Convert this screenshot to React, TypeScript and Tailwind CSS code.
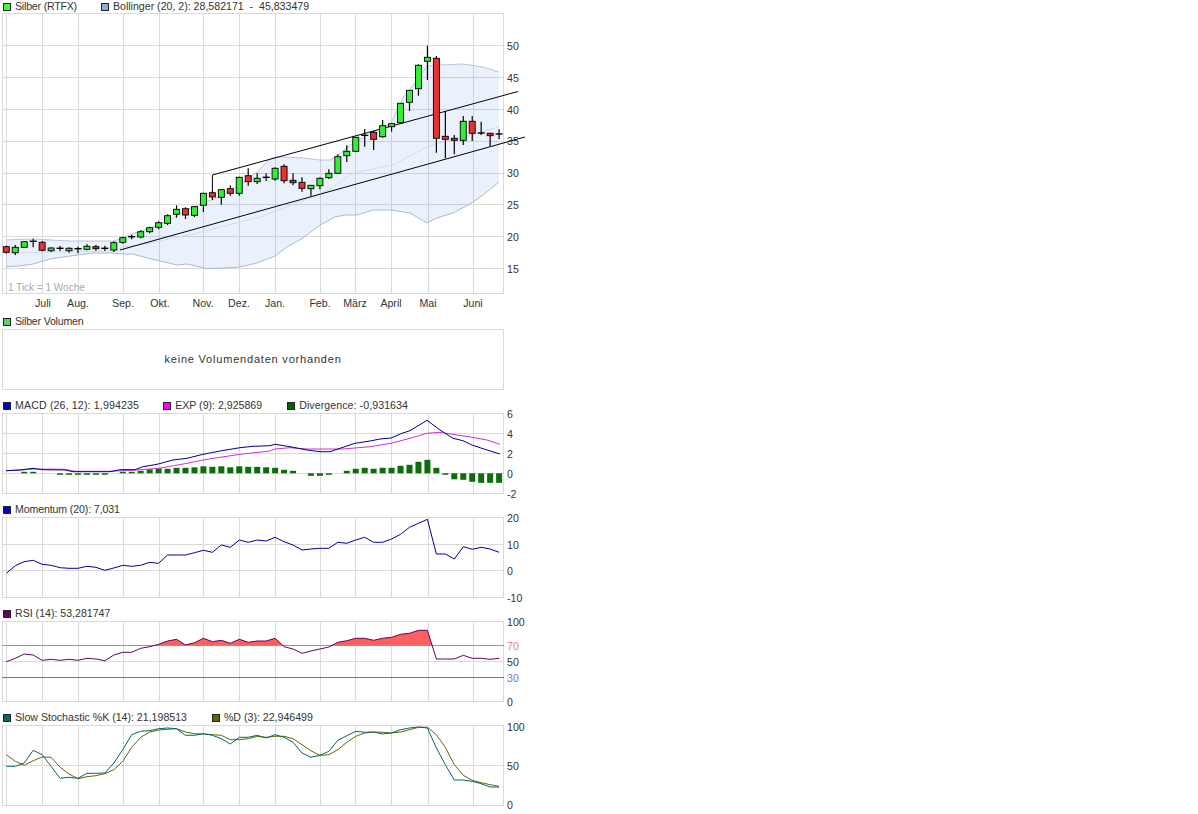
const idx = (i: number) => 6.3 + 8.96 * i;
const series = (ys: number[]) => ys.map((y, i) => `${idx(i).toFixed(1)},${y}`).join(' ');

const verticals = [2, 6, 42, 78, 123, 159, 203, 239, 275, 320, 355, 391, 428, 473, 503];
const months: [string, number][] = [
  ['Juli', 43], ['Aug.', 78], ['Sep.', 123], ['Okt.', 160], ['Nov.', 203], ['Dez.', 239],
  ['Jan.', 275], ['Feb.', 320], ['März', 355], ['April', 391], ['Mai', 428], ['Juni', 473],
];

// top, bottom, wick top, wick bottom, colour (d = doji)
type Candle = [number, number, number, number, 'g' | 'r' | 'd'];
const candles: Candle[] = [
  [246.7, 252.3, 245.5, 253.5, 'r'], [247.3, 252.7, 245, 255, 'g'], [241.7, 247.3, 241, 247.5, 'g'],
  [241.3, 241.3, 238.7, 247.3, 'd'], [242.3, 250.3, 241, 251.3, 'r'], [248, 250.7, 247.3, 252, 'g'],
  [248.3, 248.3, 246, 251, 'd'], [248.3, 250.7, 247.3, 252.7, 'g'], [248.7, 248.7, 246.7, 253.3, 'd'],
  [246.3, 249.3, 244.3, 250.3, 'g'], [246.7, 248.7, 245, 250.7, 'r'], [248.3, 248.3, 245.7, 251, 'd'],
  [242.7, 250, 241.3, 252, 'g'], [237.7, 242.3, 236.7, 243.7, 'g'], [236.7, 236.7, 234.7, 239.3, 'd'],
  [231.7, 237, 230.3, 238.3, 'g'], [227.7, 231.7, 226.7, 233.3, 'g'], [222.7, 227.3, 221.3, 229.3, 'g'],
  [215.7, 223.3, 214.3, 225, 'g'], [209.3, 214.3, 205.3, 217.7, 'g'], [208.7, 215, 207.3, 219, 'r'],
  [206.7, 215.3, 206, 217, 'g'], [193.3, 205.3, 192.7, 212, 'g'], [192.7, 197, 191, 200, 'r'],
  [189.7, 197.3, 189, 204.7, 'g'], [188.7, 193.3, 185.3, 195.7, 'r'], [177.3, 193.3, 176.7, 195.7, 'g'],
  [175.7, 181.7, 168.3, 185.7, 'r'], [178.3, 181.7, 173.3, 184, 'g'], [177.3, 177.3, 173.3, 181, 'd'],
  [168.3, 179, 167.3, 180.7, 'g'], [166.3, 180.7, 164.3, 183.3, 'r'], [180.3, 182.7, 173.3, 185.3, 'r'],
  [182.3, 188.3, 177.3, 191.7, 'r'], [185.3, 188.7, 185.3, 195.7, 'g'], [178.3, 185.7, 177.3, 189.3, 'g'],
  [173.3, 177.7, 169.3, 179, 'g'], [156.7, 173.3, 154.3, 174, 'g'], [151.3, 155.7, 145.3, 162, 'g'],
  [137.3, 151.3, 136.7, 151.7, 'g'], [135.3, 135.3, 129, 146.7, 'd'], [132.3, 139.3, 131, 150, 'r'],
  [125.7, 136.7, 120, 137.7, 'g'], [123.7, 126.7, 123, 131.7, 'g'], [103.3, 122.7, 103.3, 124, 'g'],
  [90.3, 102.3, 90, 111, 'g'], [65.3, 88.7, 64.3, 95.7, 'g'], [57.3, 61.3, 45.7, 80, 'g'],
  [58.3, 138.3, 56, 152.7, 'r'], [136.3, 139.3, 111, 158.3, 'r'], [138.3, 140.3, 135, 154.3, 'r'],
  [121.3, 140.3, 116, 145, 'g'], [121.3, 133.3, 116, 141, 'r'], [133, 133, 121.7, 135, 'd'],
  [133.3, 135.7, 132.7, 146, 'r'], [134, 134, 129.3, 139.3, 'd'],
];

const bollUpper = '6,240 15,239.5 33,239 51,240 69,241 114,241 123,238 132,234 150,228 168,221 186,210 203,203 220,197 236,187 256,173 270,159 275,157 283,157 303,158 320,160 330,160 338,155 353,143 377,130 391,123 403,98 417,80 427,66 440,65 463,64 483,67 499,72';
const bollLower = '6,266.7 20,266 33,264 50,259 63,257 93,253 113,253 123,254 133,254 147,258 160,261 177,265 187,264 207,268.7 223,268 240,267 257,263 270,258 275,256 287,247 303,238 320,225 335,217 345,215 357,215 373,210 391,210 410,213 427,223 437,218 453,213 470,204 483,195 499,182';
const bollMid = '6,253 60,252 114,251 123,247 150,243 197,233 260,217 320,194 333,187 353,173 393,165 427,147 450,140 470,135 499,127';

const macd = '6,470.7 20,470 33,468.3 42,469.7 65,470 73,471.7 110,471.7 120,469.7 135,469.7 143,466.7 157,464.3 173,460 187,458.3 203,454.3 220,451 240,447.7 253,446.3 270,445.7 275,444.3 290,446.7 307,450 320,451.7 330,451.7 343,447.3 355,443.3 370,441 380,439 391,438 402,433.3 410,430.7 427,420.3 440,430 453,438.3 463,440.7 472,445 487,450 500,454';
const exp = '6,470.7 20,470 33,469 65,469.3 75,471.3 110,471.3 137,470 159,468.3 187,463.3 203,460 220,457.3 240,454.3 270,451 275,449 290,447.7 307,449 343,449 370,446.7 391,443.3 410,438.3 427,433.3 440,432.3 453,434.3 472,437.3 487,440 500,444.3';
const divergence = [
  0, 0, 1.5, 1.5, 0, 0, -1.5, -1.5, -1.5, -1.5, -1.5, -1.5, 0, 1.5, 1.5, 2.5, 4, 5, 4.5, 5.5, 5.5, 6, 7, 6.5, 7, 6, 7, 6.5,
  6.5, 6, 5.5, 3.5, 2.5, 0, -2.5, -2.5, -1.5, 0, 2.5, 4.5, 5.5, 4.5, 5.5, 5.5, 7.5, 8.5, 11.5, 13.5, 5.5, -1.5, -6, -6.5, -8.5, -9.5, -9.5, -9.5,
];
const momentum = [
  573.3, 565.7, 561.7, 560.3, 564.3, 565.3, 567.7, 568.3, 568.3, 566.3, 567.3, 570.3, 568, 565.3, 566.3, 565.3, 562.3, 563.3, 555, 555, 555, 552.7, 550.3, 552.3, 545, 547.3, 540, 542.3,
  540, 541, 537.3, 541.7, 545, 550, 549, 548.3, 548.3, 542.3, 543.3, 540, 537.3, 542.3, 542.3, 539, 534.3, 527.3, 523.3, 519.3, 554, 554, 559, 546.7, 549.3, 547.3, 549, 552.3,
];
const rsi = [
  661.7, 658.3, 654, 655, 660.3, 659.3, 660.3, 659.3, 660.3, 658.3, 659, 660.7, 655, 652.3, 652.3, 648.3, 646.7, 644.3, 641, 639.3, 645, 642.7, 638.3, 641.7, 640.3, 643.3, 639.3, 642.3,
  641, 641, 638.3, 646.7, 649, 653.3, 651, 649, 647, 642.3, 640.7, 638.3, 638.3, 640.3, 638.3, 637.3, 634.3, 633.3, 630.3, 630.3, 659, 659, 659, 655.3, 658.3, 658.3, 659.3, 658.3,
];
const stochK = [
  766.3, 766.3, 763, 750.3, 754.7, 766.3, 778.3, 777.3, 778.3, 773.3, 773.3, 773, 763, 749.7, 734.7, 731.3, 730.7, 728.7, 728, 728.7, 735.3, 735.3, 733.7, 735.3, 738.7, 744, 737.3, 737.3,
  735.3, 738, 734.7, 737.3, 742.3, 753, 757.3, 755.3, 751.3, 740.3, 735.7, 731.3, 732.3, 732, 734, 733, 729.7, 728, 727, 728, 748, 764.7, 780, 780, 781.3, 783.7, 787, 787,
];
const stochD = [
  754.7, 761.3, 765.3, 760.7, 757, 757.3, 767.3, 774, 778.7, 776.7, 775.7, 773.7, 769.7, 761.3, 747.3, 737.3, 732, 730, 729.3, 728.7, 732, 733.7, 734, 734.7, 735.3, 739.7, 739.7, 738.7,
  736.3, 737.3, 736.3, 736.3, 738.7, 744.7, 750.7, 755.3, 754.7, 749.7, 742.3, 736.3, 733, 732, 732.3, 733, 732, 729.7, 727.3, 727.3, 734.7, 747.3, 764.7, 775.3, 780.3, 782.7, 784.7, 786.3,
];

type LegendItem = [string, string, string?];

function Legend({ items, className }: { items: LegendItem[]; className?: string }) {
  return (
    <div className={`flex h-[13px] items-center gap-[23px] pl-[3px] text-[10.6px] leading-none text-[#333] ${className ?? ''}`}>
      {items.map(([label, color, extra]) => (
        <div key={label} className={`flex items-center gap-[4px] whitespace-pre ${extra ?? ''}`}>
          <span className="h-2 w-2 border border-[#222]" style={{ backgroundColor: color }} />
          {label}
        </div>
      ))}
    </div>
  );
}

// one chart pane; the viewBox keeps data in page coordinates
function Pane({ top, height, y0, y1, rows, labels, children }: {
  top: number;
  height: number;
  y0: number;
  y1: number;
  rows: number[];
  labels: [string, number, string?][];
  children?: React.ReactNode;
}) {
  return (
    <svg width={530} height={height} viewBox={`0 ${top} 530 ${height}`} className="block overflow-visible text-[10.6px]">
      <g stroke="#dadada" strokeWidth={1} shapeRendering="crispEdges">
        {verticals.map((x) => <line key={x} x1={x + 0.5} x2={x + 0.5} y1={y0} y2={y1} />)}
        {[y0, ...rows, y1].map((y) => <line key={y} x1={2} x2={504} y1={y + 0.5} y2={y + 0.5} />)}
      </g>
      {children}
      {labels.map(([text, y, color]) => (
        <text key={text} x={507} y={y + 4} fill={color ?? '#333'}>{text}</text>
      ))}
    </svg>
  );
}

function Line({ points, color, width = 1 }: { points: string; color: string; width?: number }) {
  return <polyline points={points} fill="none" stroke={color} strokeWidth={width} />;
}

export default function App() {
  return (
    <div className="h-[814px] w-[1198px] overflow-hidden bg-white [font-family:'Liberation_Sans',Arial,sans-serif]">
      <Legend items={[['Silber (RTFX)', '#33ff33', 'tracking-[-0.2px]'], ['Bollinger (20, 2): 28,582171  -  45,833479', '#90a8d8', 'ml-px']]} />
      <Pane
        top={13}
        height={302}
        y0={13}
        y1={293}
        rows={[45, 77, 109, 141, 173, 204, 236, 268]}
        labels={[['50', 46], ['45', 78], ['40', 110], ['35', 141], ['30', 173], ['25', 205], ['20', 237], ['15', 269]]}
      >
        <polygon points={`${bollUpper} ${bollLower.split(' ').reverse().join(' ')}`} fill="#4a80e0" fillOpacity={0.11} />
        <Line points={bollMid} color="#d0dcf0" />
        <Line points={bollUpper} color="#b4c4e2" />
        <Line points={bollLower} color="#a8b9da" />
        <Line points="120,250 525,137" color="#000" />
        <Line points="212.4,196 212.4,175 518,91.5" color="#000" />
        {candles.map(([t, b, hi, lo, c], i) => {
          const x = idx(i);
          return (
            <g key={i}>
              <line x1={x} x2={x} y1={hi} y2={lo} stroke="#000" strokeWidth={1.2} />
              {c === 'd' ? (
                <line x1={x - 3.5} x2={x + 3.5} y1={t} y2={t} stroke="#000" strokeWidth={1.4} />
              ) : (
                <rect x={x - 3} y={t} width={6} height={b - t} fill={c === 'g' ? '#33ee33' : '#e83232'} stroke="#000" strokeWidth={0.9} />
              )}
            </g>
          );
        })}
        <text x={8} y={291} fill="#a8a8a8" className="text-[10px]">1 Tick = 1 Woche</text>
        {months.map(([m, x]) => (
          <text key={m} x={x} y={307} textAnchor="middle" fill="#333">{m}</text>
        ))}
      </Pane>

      <Legend items={[['Silber Volumen', '#66cc66', 'tracking-[-0.2px]']]} />
      <div className="mt-px ml-[2px] flex h-[61px] w-[502px] items-center justify-center border border-[#dadada] text-[11px] tracking-[0.8px] text-[#333]">
        keine Volumendaten vorhanden
      </div>

      <Legend
        className="mt-[9px]"
        items={[
          ['MACD (26, 12): 1,994235', '#0000cc', 'tracking-[0.15px]'],
          ['EXP (9): 2,925869', '#ff00ff', 'ml-px'],
          ['Divergence: -0,931634', '#006600', 'ml-[2px] tracking-[0.08px]'],
        ]}
      />
      <Pane
        top={412}
        height={91}
        y0={413}
        y1={493}
        rows={[433, 453, 473]}
        labels={[['6', 414], ['4', 434], ['2', 454], ['0', 473.5], ['-2', 494]]}
      >
        {divergence.map((v, i) =>
          v === 0 ? null : (
            <rect key={i} x={idx(i) - 3} y={v > 0 ? 473.3 - v : 473.3} width={6} height={Math.abs(v)} fill="#0b6e0b" />
          ),
        )}
        <Line points={exp} color="#cc33cc" />
        <Line points={macd} color="#000099" />
      </Pane>

      <Legend items={[['Momentum (20): 7,031', '#0000cc', 'tracking-[-0.12px]']]} />
      <Pane
        top={516}
        height={91}
        y0={517}
        y1={597}
        rows={[544, 570]}
        labels={[['20', 518], ['10', 544.7], ['0', 570.7], ['-10', 597.5]]}
      >
        <Line points={series(momentum)} color="#000099" />
      </Pane>

      <Legend items={[['RSI (14): 53,281747', '#660066']]} />
      <Pane
        top={620}
        height={91}
        y0={621}
        y1={701}
        rows={[661]}
        labels={[['100', 622], ['70', 646, '#e88080'], ['50', 662], ['30', 678, '#7878cc'], ['0', 702]]}
      >
        <clipPath id="overbought"><rect x={0} y={621} width={503} height={24.5} /></clipPath>
        <polygon
          points={`${idx(0)},645.5 ${series(rsi)} ${idx(55)},645.5`}
          fill="#ff5f5f"
          clipPath="url(#overbought)"
        />
        <rect x={2} y={645} width={502} height={1} fill="#ee7070" />
        <rect x={2} y={677} width={502} height={1} fill="#6c6cd0" />
        <Line points={series(rsi)} color="#660066" />
      </Pane>

      <Legend items={[['Slow Stochastic %K (14): 21,198513', '#006666'], ['%D (3): 22,946499', '#666600', 'ml-[2px]']]} />
      <Pane
        top={724}
        height={90}
        y0={725}
        y1={805}
        rows={[765]}
        labels={[['100', 727], ['50', 765.5], ['0', 805]]}
      >
        <Line points={series(stochD)} color="#666600" />
        <Line points={series(stochK)} color="#006666" />
      </Pane>
    </div>
  );
}
